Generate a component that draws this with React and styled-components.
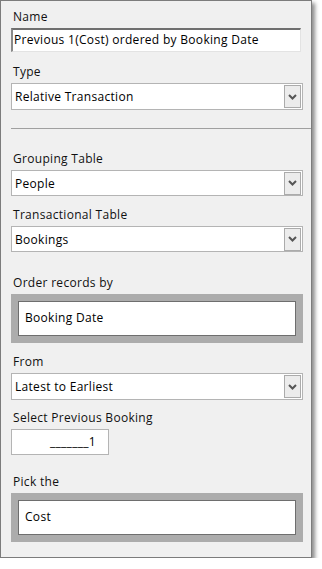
import styled, { createGlobalStyle } from 'styled-components'

const Global = createGlobalStyle`
    body {
        margin: 0;
        background: #ffffff;
        font-family: "Open Sans", "Noto Sans", sans-serif;
        font-size: 12px;
        letter-spacing: 0.3px;
        color: #000;
    }
`

export default function App() {
    return (
        <>
            <Global />
            <Panel>
                <Label top={7}>Name</Label>
                <NameInput>Previous 1(Cost) ordered by Booking Date</NameInput>

                <Label top={12}>Type</Label>
                <Select value="Relative Transaction" />

                <Separator />

                <Label top={22}>Grouping Table</Label>
                <Select value="People" height={26} />

                <Label top={11}>Transactional Table</Label>
                <Select value="Bookings" height={26} />

                <Label top={23}>Order records by</Label>
                <GroupBox value="Booking Date" />

                <Label top={11}>From</Label>
                <Select value="Latest to Earliest" />

                <Label top={10}>Select Previous Booking</Label>
                <NumberBox>_______1</NumberBox>

                <Label top={19}>Pick the</Label>
                <GroupBox value="Cost" />
            </Panel>
        </>
    )
}

function Select({ value, height = 27 }) {
    return (
        <SelectBox h={height}>
            <SelectText>{value}</SelectText>
            <DropButton>
                <svg width="9" height="6" viewBox="0 0 9 6">
                    <path d="M1 1 L4.5 4.5 L8 1" fill="none" stroke="#555" strokeWidth="2" />
                </svg>
            </DropButton>
        </SelectBox>
    )
}

function GroupBox({ value }) {
    return (
        <GrayFrame>
            <InnerField>{value}</InnerField>
        </GrayFrame>
    )
}

const Panel = styled.div`
    width: 312px;
    height: 558px;
    box-sizing: border-box;
    background: #f0f0f0;
    border: 1px solid #7c7c7c;
    box-shadow: 3px 3px 4px rgba(0, 0, 0, 0.45);
    padding: 1px 0 0 10px;
    display: flex;
    flex-direction: column;
    align-items: flex-start;
`

const Label = styled.div`
    height: 16px;
    line-height: 16px;
    margin-top: ${p => p.top}px;
    margin-bottom: 3px;
    padding-left: 2px;
    color: #111;
    white-space: nowrap;
`

const NameInput = styled.div`
    width: 290px;
    height: 24px;
    box-sizing: border-box;
    background: #fff;
    border-top: 2px solid #6f6f6f;
    border-left: 2px solid #8a8a8a;
    border-right: 1px solid #e3e3e3;
    border-bottom: 1px solid #e3e3e3;
    padding-left: 1px;
    line-height: 20px;
    white-space: nowrap;
    overflow: hidden;
`

const SelectBox = styled.div`
    width: 292px;
    height: ${p => p.h}px;
    box-sizing: border-box;
    background: #fff;
    border: 1px solid #b4b4b4;
    display: flex;
    align-items: center;
    padding: 0 1px 0 3px;
`

const SelectText = styled.div`
    flex: 1;
    white-space: nowrap;
`

const DropButton = styled.div`
    width: 17px;
    height: 23px;
    box-sizing: border-box;
    border: 1px solid #ababab;
    background: #ececec;
    display: flex;
    align-items: center;
    justify-content: center;
`

const Separator = styled.div`
    align-self: stretch;
    height: 1px;
    background: #a0a0a0;
    margin-top: 18px;
`

const GrayFrame = styled.div`
    width: 292px;
    box-sizing: border-box;
    background: #acacac;
    padding: 7px;
`

const InnerField = styled.div`
    height: 35px;
    box-sizing: border-box;
    background: #fff;
    border: 1px solid #6e6e6e;
    padding-left: 6px;
    line-height: 32px;
`

const NumberBox = styled.div`
    width: 98px;
    height: 26px;
    box-sizing: border-box;
    background: #fff;
    border: 1px solid #b4b4b4;
    text-align: right;
    padding-right: 12px;
    line-height: 24px;
`
